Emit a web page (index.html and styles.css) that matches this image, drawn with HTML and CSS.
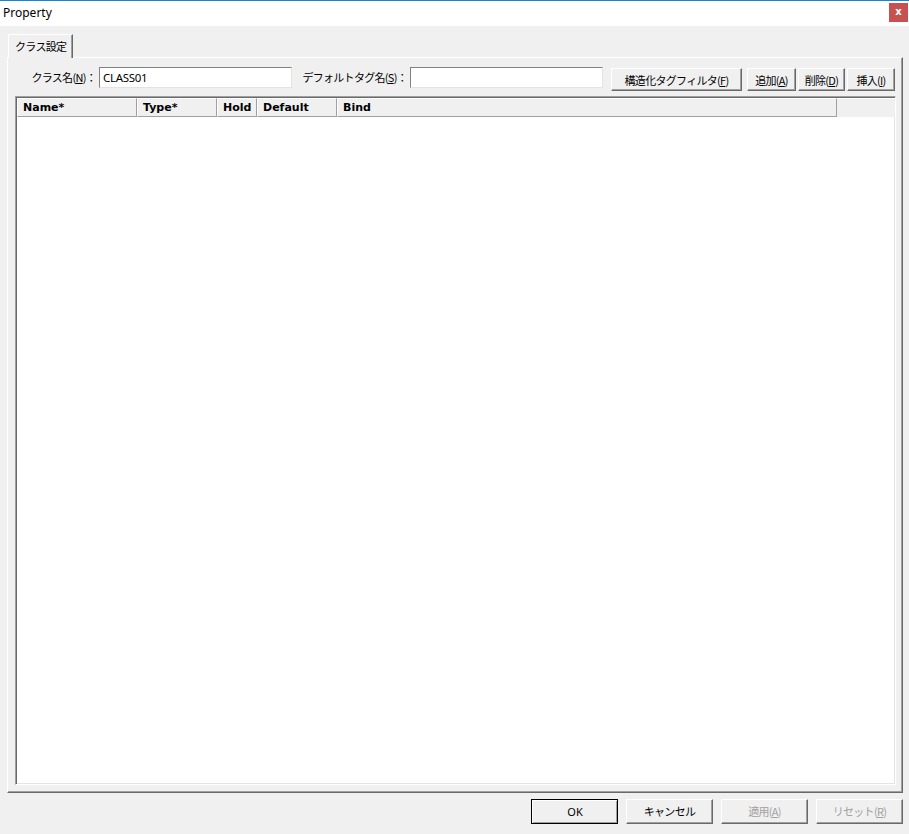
FILE: index.html
```html
<!DOCTYPE html>
<html lang="ja">
<head>
    <meta charset="UTF-8">
    <title>Property</title>
    <link rel="stylesheet" href="styles.css">
</head>
<body>

    <!-- Title Bar -->
    <div class="titlebar">
        <span class="title">Property</span>
        <span class="close-btn">x</span>
    </div>

    <div class="client">
        <!-- Tabs -->
        <div class="tabs">
            <div class="tab">クラス設定</div>
        </div>

        <div class="panel">
            <div class="toolbar">
                <label class="lbl lbl-class">クラス名(<u>N</u>)：</label>
                <div class="field field-class">CLASS01</div>
                <label class="lbl lbl-tag">デフォルトタグ名(<u>S</u>)：</label>
                <div class="field field-tag"></div>
                <button class="btn btn-filter">構造化タグフィルタ(<u>F</u>)</button>
                <button class="btn btn-add">追加(<u>A</u>)</button>
                <button class="btn btn-del">削除(<u>D</u>)</button>
                <button class="btn btn-ins">挿入(<u>I</u>)</button>
            </div>

            <!-- List View -->
            <div class="listview">
                <div class="list-header">
                    <div class="col col-name">Name*</div>
                    <div class="col col-type">Type*</div>
                    <div class="col col-hold">Hold</div>
                    <div class="col col-default">Default</div>
                    <div class="col col-bind">Bind</div>
                    <div class="col-fill"></div>
                </div>
                <div class="list-body"></div>
            </div>
        </div>

        <!-- Dialog Buttons -->
        <div class="footer">
            <button class="btn dlg-btn default-btn">OK</button>
            <button class="btn dlg-btn">キャンセル</button>
            <button class="btn dlg-btn disabled">適用(<u>A</u>)</button>
            <button class="btn dlg-btn disabled">リセット(<u>R</u>)</button>
        </div>
    </div>

</body>
</html>
```

FILE: styles.css
```css
/* General Reset */
* {
    margin: 0;
    padding: 0;
    box-sizing: border-box;
}

body {
    width: 909px;
    height: 834px;
    background-color: #f0f0f0;
    font-family: "Noto Sans CJK JP", "Noto Sans", sans-serif;
    font-size: 11px;
    letter-spacing: -0.7px;
    color: #000;
    overflow: hidden;
}

/* Title Bar */
.titlebar {
    height: 26px;
    background-color: #fff;
    border-top: 1px solid #1883d7;
    display: flex;
    align-items: center;
    justify-content: space-between;
    padding: 0 1px 2px 3px;
    letter-spacing: 0;
}

.title {
    font-family: "Noto Sans", sans-serif;
    font-size: 12px;
}

.close-btn {
    width: 19px;
    height: 19px;
    background-color: #c75050;
    color: #fff;
    font-family: "DejaVu Sans", sans-serif;
    font-weight: bold;
    font-size: 10px;
    line-height: 17px;
    text-align: center;
}

/* Client Area */
.client {
    padding: 8px 6px 0 7px;
}

.tabs {
    display: flex;
    padding-left: 1px;
    height: 23px;
}

.tab {
    width: 65px;
    height: 24px;
    background-color: #f0f0f0;
    border-top: 1px solid #fff;
    border-left: 1px solid #fff;
    border-right: 1px solid #696969;
    box-shadow: inset -1px 0 0 #a0a0a0;
    padding: 3px 0 0 6px;
    white-space: nowrap;
    position: relative;
    z-index: 1;
}

/* Tab Panel */
.panel {
    height: 736px;
    border-top: 1px solid #fff;
    border-left: 1px solid #fff;
    border-right: 1px solid #696969;
    border-bottom: 1px solid #696969;
    box-shadow: inset -1px -1px 0 #a0a0a0;
    padding: 9px 6px 7px 7px;
    display: flex;
    flex-direction: column;
}

.toolbar {
    display: flex;
    align-items: flex-start;
    height: 23px;
}

.lbl {
    height: 21px;
    line-height: 21px;
    display: flex;
    justify-content: flex-end;
    padding-right: 3px;
    white-space: nowrap;
    flex-shrink: 0;
    color: #000;
}

.lbl-class {
    width: 84px;
}

.lbl-tag {
    width: 118px;
}

.field {
    height: 21px;
    width: 193px;
    flex-shrink: 0;
    background-color: #fff;
    border-top: 1px solid #828282;
    border-left: 1px solid #828282;
    border-right: 1px solid #e3e3e3;
    border-bottom: 1px solid #e3e3e3;
    padding-left: 3px;
    line-height: 19px;
    font-family: "Noto Sans", sans-serif;
    font-size: 11.5px;
    letter-spacing: -0.3px;
}

/* Buttons */
.btn {
    height: 23px;
    flex-shrink: 0;
    background-color: #f0f0f0;
    border-top: 1px solid #fff;
    border-left: 1px solid #fff;
    border-right: 1px solid #696969;
    border-bottom: 1px solid #696969;
    box-shadow: inset -1px -1px 0 #a0a0a0;
    font-family: "Noto Sans CJK JP", sans-serif;
    font-size: 11px;
    letter-spacing: -0.7px;
    color: #000;
    white-space: nowrap;
    margin-top: 1px;
}

.btn-filter {
    width: 131px;
    margin-left: 8px;
}

.btn-add {
    width: 49px;
    margin-left: 5px;
}

.btn-del {
    width: 47px;
    margin-left: 2px;
}

.btn-ins {
    width: 48px;
    margin-left: 2px;
}

/* List View */
.listview {
    margin-top: 6px;
    flex: 1;
    background-color: #fff;
    border-top: 1px solid #a0a0a0;
    border-left: 1px solid #a0a0a0;
    border-right: 1px solid #fff;
    border-bottom: 1px solid #fff;
    box-shadow: inset 1px 1px 0 #696969, -1px -1px 0 #e3e3e3 inset;
    padding: 1px 0 0 1px;
    display: flex;
    flex-direction: column;
}

.list-header {
    display: flex;
    height: 19px;
    background-color: #f0f0f0;
}

.col {
    height: 19px;
    border-top: 1px solid #fff;
    border-left: 1px solid #fff;
    border-right: 1px solid #a0a0a0;
    border-bottom: 1px solid #a0a0a0;
    font-family: "DejaVu Sans", sans-serif;
    font-weight: bold;
    font-size: 11px;
    letter-spacing: 0;
    line-height: 18px;
    padding-left: 5px;
}

.col-name {
    width: 120px;
}

.col-type {
    width: 80px;
}

.col-hold {
    width: 40px;
}

.col-default {
    width: 80px;
}

.col-bind {
    width: 500px;
}

.col-fill {
    flex: 1;
    border-top: 1px solid #fff;
}

.list-body {
    flex: 1;
}

/* Footer */
.footer {
    display: flex;
    justify-content: flex-end;
    gap: 8px;
    padding-top: 6px;
}

.dlg-btn {
    width: 87px;
    height: 25px;
    margin-top: 0;
    padding-bottom: 2px;
}

.default-btn {
    outline: 1px solid #000;
    outline-offset: -1px;
    border-top: 2px solid #fff;
    border-left: 2px solid #fff;
    border-right: 1px solid #696969;
    border-bottom: 1px solid #696969;
    box-shadow: inset -1px -1px 0 #a0a0a0;
    font-family: "Noto Sans", sans-serif;
    letter-spacing: 0;
}

.dlg-btn.disabled {
    color: #a0a0a0;
}
```
